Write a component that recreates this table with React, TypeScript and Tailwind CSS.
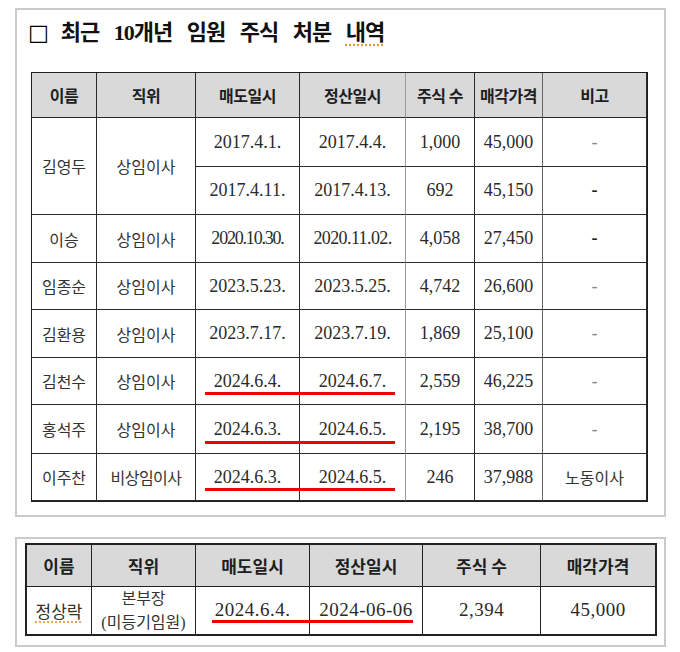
import React from "react";

const KO = "font-['Noto_Sans_CJK_KR',sans-serif]";
const BODY = "font-['Liberation_Serif','Noto_Sans_CJK_KR',serif]";

type Row = {
  name: string;
  pos: string;
  sell: string;
  settle: string;
  qty: string;
  price: string;
  note: string;
  noteDark?: boolean;
  red?: boolean;
  tight?: boolean;
};

const rows: Row[] = [
  { name: "이승", pos: "상임이사", sell: "2020.10.30.", settle: "2020.11.02.", qty: "4,058", price: "27,450", note: "-", noteDark: true, tight: true },
  { name: "임종순", pos: "상임이사", sell: "2023.5.23.", settle: "2023.5.25.", qty: "4,742", price: "26,600", note: "-" },
  { name: "김환용", pos: "상임이사", sell: "2023.7.17.", settle: "2023.7.19.", qty: "1,869", price: "25,100", note: "-" },
  { name: "김천수", pos: "상임이사", sell: "2024.6.4.", settle: "2024.6.7.", qty: "2,559", price: "46,225", note: "-", red: true },
  { name: "홍석주", pos: "상임이사", sell: "2024.6.3.", settle: "2024.6.5.", qty: "2,195", price: "38,700", note: "-", red: true },
  { name: "이주찬", pos: "비상임이사", sell: "2024.6.3.", settle: "2024.6.5.", qty: "246", price: "37,988", note: "노동이사", red: true },
];

function C({ children, className = "" }: { children?: React.ReactNode; className?: string }) {
  return (
    <div className={"relative flex items-center justify-center border-b border-r border-[#2a2a2a] " + className}>
      {children}
    </div>
  );
}

const H1 = "bg-[#d9d9d9] text-[16px] font-semibold text-[#1e1e1e] tracking-[-0.5px] " + KO;
const KB = "text-[16px] text-[#333] " + KO;
const NB = "text-[18px] text-[#2a2a2a] " + BODY;

function Dash({ dark }: { dark?: boolean }) {
  return <span className={dark ? "text-[#222] font-bold" : "text-[#8a8a8a]"}>-</span>;
}

export default function App() {
  return (
    <div className="w-[680px] h-[652px] bg-white overflow-hidden pt-[8px] pl-[15px]">
      {/* Top box */}
      <div className="w-[651px] h-[509px] border-2 border-[#cbcbcb]">
        <div className="h-[45px] pl-[11px] flex items-center">
          <span className="text-[22px] text-black leading-none mr-[12px] font-['DejaVu_Sans',sans-serif]">□</span>
          <span className={"text-[22px] font-bold text-[#111] tracking-[-1px] [word-spacing:10px] " + BODY}>
            최근 10개년 임원 주식 처분{" "}
            <span className="underline decoration-dotted decoration-[#e39a3a] underline-offset-[4px]">내역</span>
          </span>
        </div>
        <div className="ml-[14px] mt-[17px] grid w-fit grid-cols-[65px_99px_104px_106px_69px_68px_104px] grid-rows-[45px_49px_48px_48px_47px_48px_47px_49px_47px] border border-[#1e1e1e]">
          {/* header */}
          <C className={H1}>이름</C>
          <C className={H1}>직위</C>
          <C className={H1}>매도일시</C>
          <C className={H1 + " border-r-[#9a9a9a]"}>정산일시</C>
          <C className={H1}>주식 수</C>
          <C className={H1 + " border-r-[#666]"}>매각가격</C>
          <C className={H1}>비고</C>

          {/* 김영두 */}
          <C className={"row-span-2 " + KB}>김영두</C>
          <C className={"row-span-2 " + KB}>상임이사</C>
          <C className={NB}>2017.4.1.</C>
          <C className={NB + " border-r-[#9a9a9a]"}>2017.4.4.</C>
          <C className={NB}>1,000</C>
          <C className={NB + " border-r-[#666]"}>45,000</C>
          <C className={NB}><Dash /></C>
          <C className={NB}>2017.4.11.</C>
          <C className={NB + " border-r-[#9a9a9a]"}>2017.4.13.</C>
          <C className={NB}>692</C>
          <C className={NB + " border-r-[#666]"}>45,150</C>
          <C className={NB}><Dash dark /></C>

          {rows.map((r) => (
            <React.Fragment key={r.name}>
              <C className={KB}>{r.name}</C>
              <C className={KB + (r.pos.length > 4 ? " tracking-[-0.5px]" : "")}>{r.pos}</C>
              <C className={NB + (r.tight ? " tracking-[-1.2px]" : "")}>
                {r.sell}
                {r.red && <div className="absolute left-[9px] bottom-[9px] h-[3px] w-[190px] bg-[#f20000]" />}
              </C>
              <C className={NB + " border-r-[#9a9a9a]" + (r.tight ? " tracking-[-0.6px]" : "")}>{r.settle}</C>
              <C className={NB}>{r.qty}</C>
              <C className={NB + " border-r-[#666]"}>{r.price}</C>
              <C className={r.note === "-" ? NB : KB + " text-[#222]"}>
                {r.note === "-" ? <Dash dark={r.noteDark} /> : r.note}
              </C>
            </React.Fragment>
          ))}
        </div>
      </div>

      {/* Bottom box */}
      <div className="mt-[20px] w-[651px] h-[110px] border-2 border-[#cbcbcb]">
        <div className="ml-[8px] mt-[4px] grid w-fit grid-cols-[65px_104px_114px_113px_118px_114px] grid-rows-[42px_47px] border-2 border-[#222]">
          {["이름", "직위", "매도일시", "정산일시", "주식 수", "매각가격"].map((h, i) => (
            <div
              key={h}
              className={
                "flex items-center justify-center bg-[#d9d9d9] border-b border-[#222] text-[17px] font-bold text-[#1e1e1e] " +
                KO +
                (i < 5 ? " border-r" : "")
              }
            >
              {h}
            </div>
          ))}
          <div className={"flex items-center justify-center border-r border-[#222] text-[17px] text-[#3a3020] " + KO}>
            <span className="underline decoration-dotted decoration-[#e39a3a] underline-offset-[4px]">정상락</span>
          </div>
          <div className={"flex flex-col items-center justify-center border-r border-[#222] text-[16px] leading-[24px] text-[#333] " + BODY}>
            <span>본부장</span>
            <span>(미등기임원)</span>
          </div>
          <div className={"relative flex items-center justify-center border-r border-[#222] text-[19px] tracking-[0.5px] text-[#2a2a2a] " + BODY}>
            2024.6.4.
            <div className="absolute left-[16px] bottom-[11px] h-[3px] w-[201px] bg-[#f20000]" />
          </div>
          <div className={"flex items-center justify-center border-r border-[#222] text-[19px] tracking-[0.5px] text-[#2a2a2a] " + BODY}>
            2024-06-06
          </div>
          <div className={"flex items-center justify-center border-r border-[#222] text-[19px] tracking-[0.5px] text-[#2a2a2a] " + BODY}>
            2,394
          </div>
          <div className={"flex items-center justify-center text-[19px] tracking-[0.5px] text-[#2a2a2a] " + BODY}>
            45,000
          </div>
        </div>
      </div>
    </div>
  );
}
